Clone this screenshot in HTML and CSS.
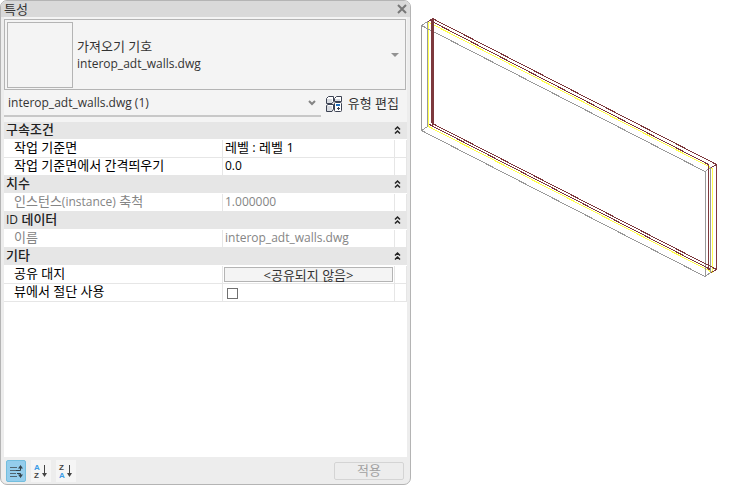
FILE: index.html
```html
<!DOCTYPE html>
<html lang="ko">
<head>
<meta charset="utf-8">
<title>특성</title>
<link rel="stylesheet" href="styles.css">
</head>
<body>
<main class="workspace">
  <section class="palette" aria-labelledby="palette-title">
    <header class="titlebar">
      <h1 class="title" id="palette-title">특성</h1>
      <button class="close" type="button" aria-label="닫기">
        <svg width="10" height="10" viewBox="0 0 10 10"><path d="M1 1 9 9M9 1 1 9" fill="none" stroke="#777" stroke-width="2"/></svg>
      </button>
    </header>

    <div class="content">
      <button class="type-selector" type="button" aria-haspopup="listbox">
        <span class="preview"></span>
        <span class="type-name"><span>가져오기 기호</span><span class="latin">interop_adt_walls.dwg</span></span>
        <svg class="type-arrow" width="8" height="4" viewBox="0 0 8 4"><path d="M0 0H8L4 4Z" fill="#929292"/></svg>
      </button>

      <div class="filter-row">
        <div class="filter">
          <select class="filter-select latin" aria-label="필터">
            <option>interop_adt_walls.dwg (1)</option>
          </select>
          <svg class="filter-arrow" width="8" height="6" viewBox="0 0 8 6"><path d="M1 1 4 4 7 1" fill="none" stroke="#858585" stroke-width="2"/></svg>
        </div>
        <button class="edit-type" type="button">
          <svg width="16" height="16" viewBox="0 0 16 16">
            <g fill="#fff" stroke="#3c4253" stroke-width="1">
              <path d="M.5 2.500 2.500.5H7.500V5.500L6 7.500H.5Z"/>
              <path d="M8.500 2.500 10.500.5H15.500V5.500H8.500Z"/>
              <path d="M.5 9.500 2 8.500H7.500V13L6 15.500H.5Z"/>
            </g>
            <path d="M1 3H6V7H1ZM9 3H14V5H9ZM1 10H6V15H1Z" fill="#d9dce1"/>
            <rect x="8.500" y="6.500" width="7" height="9" rx="1" fill="#fff" stroke="#3c4253"/>
            <path d="M10 8H14V10H10Z" fill="#1f6fbf"/>
            <path d="M11 12H12V11H13V12H14V13H13V14H12V13H11Z" fill="#3c4253"/>
          </svg>
          유형 편집
        </button>
      </div>

      <div class="properties">
        <table class="grid">
          <colgroup><col class="col-name"><col class="col-value"><col class="col-link"></colgroup>
          <tbody>
            <tr class="group"><th colspan="2">구속조건</th><td><button class="collapse" type="button" aria-label="구속조건 접기"><svg width="5" height="8" viewBox="1 0 5 8"><path d="M1 3.500 3.500 1 6 3.500M1 7.500 3.500 5 6 7.500"/></svg></button></td></tr>
            <tr><th><label for="plane">작업 기준면</label></th><td><input class="value" id="plane" type="text" value="레벨 : 레벨 1"></td><td></td></tr>
            <tr><th><label for="offset">작업 기준면에서 간격띄우기</label></th><td><input class="value latin" id="offset" type="text" value="0.0"></td><td></td></tr>
          </tbody>
          <tbody>
            <tr class="group"><th colspan="2">치수</th><td><button class="collapse" type="button" aria-label="치수 접기"><svg width="5" height="8" viewBox="1 0 5 8"><path d="M1 3.500 3.500 1 6 3.500M1 7.500 3.500 5 6 7.500"/></svg></button></td></tr>
            <tr class="readonly"><th><label for="scale">인스턴스<span class="latin">(instance)</span> 축척</label></th><td><input class="value latin" id="scale" type="text" value="1.000000" disabled></td><td></td></tr>
          </tbody>
          <tbody>
            <tr class="group"><th colspan="2"><span class="latin">ID</span> 데이터</th><td><button class="collapse" type="button" aria-label="ID 데이터 접기"><svg width="5" height="8" viewBox="1 0 5 8"><path d="M1 3.500 3.500 1 6 3.500M1 7.500 3.500 5 6 7.500"/></svg></button></td></tr>
            <tr class="readonly"><th><label for="name">이름</label></th><td><input class="value latin" id="name" type="text" value="interop_adt_walls.dwg" disabled></td><td></td></tr>
          </tbody>
          <tbody>
            <tr class="group"><th colspan="2">기타</th><td><button class="collapse" type="button" aria-label="기타 접기"><svg width="5" height="8" viewBox="1 0 5 8"><path d="M1 3.500 3.500 1 6 3.500M1 7.500 3.500 5 6 7.500"/></svg></button></td></tr>
            <tr><th><label for="shared">공유 대지</label></th><td><button class="shared" id="shared" type="button">&lt;공유되지 않음&gt;</button></td><td></td></tr>
            <tr><th><label for="cut">뷰에서 절단 사용</label></th><td><input class="check" id="cut" type="checkbox"></td><td></td></tr>
          </tbody>
        </table>
      </div>
    </div>

    <footer class="footer">
      <button class="sort active" type="button" aria-label="그룹별 정렬" aria-pressed="true">
        <svg width="18" height="20" viewBox="0 0 18 20"><path d="M3 6.500H10M3 9.500H9M3 12.500H9M3 15.500H10" stroke="#526671"/><path d="M9 9.500H13.500V6M10 12.500H13.500V15" fill="none" stroke="#35434b"/><path d="M11 7.500H16L13.500 4ZM11 13.500H16L13.500 17Z" fill="#35434b"/></svg>
      </button>
      <button class="sort" type="button" aria-label="오름차순 정렬" aria-pressed="false">
        <svg width="18" height="20" viewBox="0 0 18 20"><text class="letter letter-a" x="2" y="9">A</text><text class="letter" x="2" y="17">Z</text><path d="M12 4H13V13H12Z" fill="#444"/><path d="M10 12H15L12.500 16Z" fill="#444"/></svg>
      </button>
      <button class="sort" type="button" aria-label="내림차순 정렬" aria-pressed="false">
        <svg width="18" height="20" viewBox="0 0 18 20"><text class="letter" x="2" y="9">Z</text><text class="letter letter-a" x="2" y="17">A</text><path d="M12 4H13V13H12Z" fill="#444"/><path d="M10 12H15L12.500 16Z" fill="#444"/></svg>
      </button>
      <button class="apply" type="button" disabled>적용</button>
    </footer>
  </section>

  <section class="view" aria-label="벽 3D 뷰">
    <svg class="drawing" viewBox="411 0 326 485" role="img" aria-label="가져온 벽">
      <g class="wall wall-yellow">
        <path d="M428.500 22V126.500L712.500 272.500V168.500L429 22.500"/>
      </g>
      <g class="wall wall-gray">
        <path d="M421.500 25.500V130.500L705 276.500V171.500ZM421.500 25.500 427.500 21.500V126.500L421.500 130.500M705 171.500 710.500 167.500V272.500L705 276.500"/>
      </g>
      <g class="wall wall-maroon">
        <path d="M431.500 18.500V123M432.500 18.500V126M433.500 20V124"/>
        <path d="M432.500 18.500 716.500 164.500V269.500L432.500 123.500M430 20.500 708.500 164.500V270M429.500 124.500 710.500 269.500M428 21.500 432.500 18.500M711.500 167.500 716.500 164.500M711 272.500 716.500 269.500"/>
      </g>
    </svg>
  </section>
</main>
</body>
</html>
```
FILE: styles.css
```css
* {
  box-sizing: border-box;
}

body {
  margin: 0;
  background: #fff;
  color: #333;
  font: 13px/17px "Open Sans", "Noto Sans CJK KR", sans-serif;
}

button,
input,
select {
  margin: 0;
  padding: 0;
  border: 0;
  border-radius: 0;
  background: none;
  color: inherit;
  font: inherit;
}

svg {
  display: block;
}

.latin {
  font-size: 12px;
}

.workspace {
  display: grid;
  grid-template-columns: 411fr 326fr;
  min-height: 100vh;
}

.palette {
  display: flex;
  flex-direction: column;
  min-width: 0;
  overflow: hidden;
  border: 1px solid #b4b4b4;
  border-radius: 7px;
  background: #ededed;
}

.titlebar {
  display: flex;
  align-items: center;
  justify-content: space-between;
  height: 16px;
  padding: 0 3px;
  background: #d9d9d9;
}

.title {
  margin: 0;
  font-size: 13px;
  font-weight: 400;
}

.content {
  display: flex;
  flex: 1;
  flex-direction: column;
  margin: 0 3px;
  padding-top: 2px;
  background: #f4f4f4;
}

.type-selector {
  display: flex;
  align-items: center;
  gap: 4px;
  height: 71px;
  margin-right: 1px;
  padding: 0 6px 0 2px;
  border: 1px solid #b4b4b4;
  text-align: left;
}

.preview {
  width: 66px;
  height: 66px;
  border: 1px solid #b4b4b4;
}

.type-name {
  display: flex;
  flex: 1;
  flex-direction: column;
}

.filter-row {
  display: flex;
  height: 32px;
  padding-bottom: 5px;
}

.filter {
  display: flex;
  flex: 1;
  align-items: center;
  padding: 0 5px 0 4px;
  border-bottom: 2px solid #c8c8c8;
}

.filter-select {
  flex: 1;
  min-width: 0;
  appearance: none;
}

.edit-type {
  display: flex;
  align-items: center;
  gap: 6px;
  padding: 0 8px 0 5px;
}

.properties {
  flex: 1;
  background: #fff;
}

.grid {
  width: 100%;
  table-layout: fixed;
  border-spacing: 0;
  color: #000;
}

.col-value {
  width: 172px;
}

.col-link {
  width: 12px;
}

.grid th,
.grid td {
  height: 18px;
  padding: 0;
  border-right: 1px solid #e6e6e6;
  border-bottom: 1px solid #e6e6e6;
  font-weight: 400;
  line-height: 15px;
  text-align: left;
  vertical-align: top;
}

.grid th {
  padding-left: 10px;
}

.grid .group th,
.grid .group td {
  border-right: 0;
  border-bottom-color: #fff;
  background: #e6e6e6;
  background-clip: padding-box;
  color: #222;
}

.grid .group th {
  padding-left: 2px;
  font-weight: 500;
}

.grid .readonly {
  color: #858585;
}

.value {
  display: block;
  width: 100%;
  height: 15px;
  padding: 0 2px;
}

.collapse {
  display: flex;
  align-items: center;
  height: 16px;
}

.collapse svg {
  overflow: visible;
}

.collapse path {
  fill: none;
  stroke: #222;
  stroke-width: 1.500;
}

.shared {
  display: block;
  width: calc(100% - 2px);
  height: 15px;
  margin: 1px 1px 0;
  border: 1px solid #b4b4b4;
  background: #f4f4f4;
  color: #333;
  line-height: 12px;
}

.check {
  display: block;
  width: 11px;
  height: 11px;
  margin: 4px 0 0 4px;
  border: 1px solid #707070;
  background: #fff;
  appearance: none;
}

.footer {
  display: flex;
  align-items: center;
  gap: 5px;
  height: 27px;
  padding: 0 6px 0 5px;
}

.sort {
  display: grid;
  place-items: center;
  width: 20px;
  height: 22px;
  border: 1px solid #f5f5f5;
  background: #f5f5f5;
}

.sort.active {
  border-color: #73bede;
  border-radius: 2px;
  background: #94cdec;
}

.letter {
  fill: #444;
  font: bold 8px "Liberation Sans", sans-serif;
}

.letter-a {
  fill: #3a9be6;
}

.apply {
  width: 70px;
  height: 18px;
  margin-left: auto;
  border: 1px solid #d4d4d4;
  border-radius: 2px;
  color: #a0a0a0;
  line-height: 15px;
}

.view {
  min-width: 0;
}

.drawing {
  width: 100%;
}

.wall {
  fill: none;
  shape-rendering: crispEdges;
}

.wall-gray {
  stroke: #999;
}

.wall-maroon {
  stroke: #7d393d;
}

.wall-yellow {
  stroke: #ffff4d;
}
```
